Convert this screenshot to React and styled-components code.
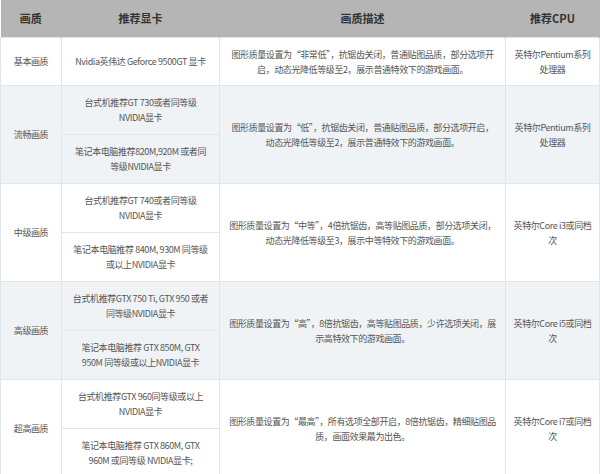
import React from "react";
import styled, { createGlobalStyle } from "styled-components";

const G = createGlobalStyle`
  html,body{margin:0;padding:0;background:#fff;}
  body{font-family:"Microsoft YaHei","Noto Sans CJK SC",sans-serif;}
`;
const Table = styled.table`
  width:599px;border-collapse:collapse;table-layout:fixed;
  font-size:9px;letter-spacing:-0.4px;color:#555;line-height:15px;
`;
const Th = styled.th`
  background:#b5b5b5;color:#333;font-weight:bold;font-size:11px;letter-spacing:0;height:37px;
  padding:0;border-right:1px solid #b5b5b5;
`;
const Td = styled.td`
  background:${p => (p.$alt ? "#f0f3f6" : "#fff")};
  border:1px solid #e3e6e9;text-align:center;vertical-align:middle;
  padding:0 ${p => p.$pad ?? 6}px;height:${p => p.$h || 47}px;
`;

const rows = [
  { q: "基本画质", gpus: ["Nvidia英伟达 Geforce 9500GT 显卡"], d: "图形质量设置为“非常低”，抗锯齿关闭，普通贴图品质，部分选项开启，动态光降低等级至2，展示普通特效下的游戏画面。", c: "英特尔Pentium系列处理器" },
  { q: "流畅画质", gpus: ["台式机推荐GT 730或者同等级NVIDIA显卡", "笔记本电脑推荐820M,920M 或者同等级NVIDIA显卡"], d: "图形质量设置为“低”，抗锯齿关闭，普通贴图品质，部分选项开启，动态光降低等级至2，展示普通特效下的游戏画面。", c: "英特尔Pentium系列处理器" },
  { q: "中级画质", gpus: ["台式机推荐GT 740或者同等级NVIDIA显卡", "笔记本电脑推荐 840M, 930M 同等级或以上NVIDIA显卡"], d: "图形质量设置为“中等”，4倍抗锯齿，高等贴图品质，部分选项关闭，动态光降低等级至3，展示中等特效下的游戏画面。", c: "英特尔Core i3或同档次" },
  { q: "高级画质", gpus: ["台式机推荐GTX 750 Ti, GTX 950 或者同等级NVIDIA显卡", "笔记本电脑推荐 GTX 850M, GTX 950M 同等级或以上NVIDIA显卡"], d: "图形质量设置为“高”，8倍抗锯齿，高等贴图品质，少许选项关闭，展示高特效下的游戏画面。", c: "英特尔Core i5或同档次" },
  { q: "超高画质", gpus: ["台式机推荐GTX 960同等级或以上NVIDIA显卡", "笔记本电脑推荐 GTX 860M, GTX 960M 或同等级 NVIDIA显卡;"], d: "图形质量设置为“最高”，所有选项全部开启，8倍抗锯齿，精细贴图品质，画面效果最为出色。", c: "英特尔Core i7或同档次" },
];

export default function App() {
  return (
    <>
      <G />
      <Table>
        <colgroup>
          <col style={{ width: 61 }} /><col style={{ width: 158 }} /><col style={{ width: 286 }} /><col style={{ width: 94 }} />
        </colgroup>
        <thead>
          <tr><Th>画质</Th><Th>推荐显卡</Th><Th>画质描述</Th><Th>推荐CPU</Th></tr>
        </thead>
        <tbody>
          {rows.map((r, i) => {
            const alt = i % 2 === 1;
            const n = r.gpus.length;
            return r.gpus.map((g, j) => (
              <tr key={i + "-" + j}>
                {j === 0 && <Td $alt={alt} $pad={2} rowSpan={n}>{r.q}</Td>}
                <Td $alt={alt} $pad={10} $h={n === 1 ? 47 : 48}>{g}</Td>
                {j === 0 && <Td $alt={alt} $pad={8} rowSpan={n}>{r.d}</Td>}
                {j === 0 && <Td $alt={alt} $pad={6} rowSpan={n}>{r.c}</Td>}
              </tr>
            ));
          })}
        </tbody>
      </Table>
    </>
  );
}
